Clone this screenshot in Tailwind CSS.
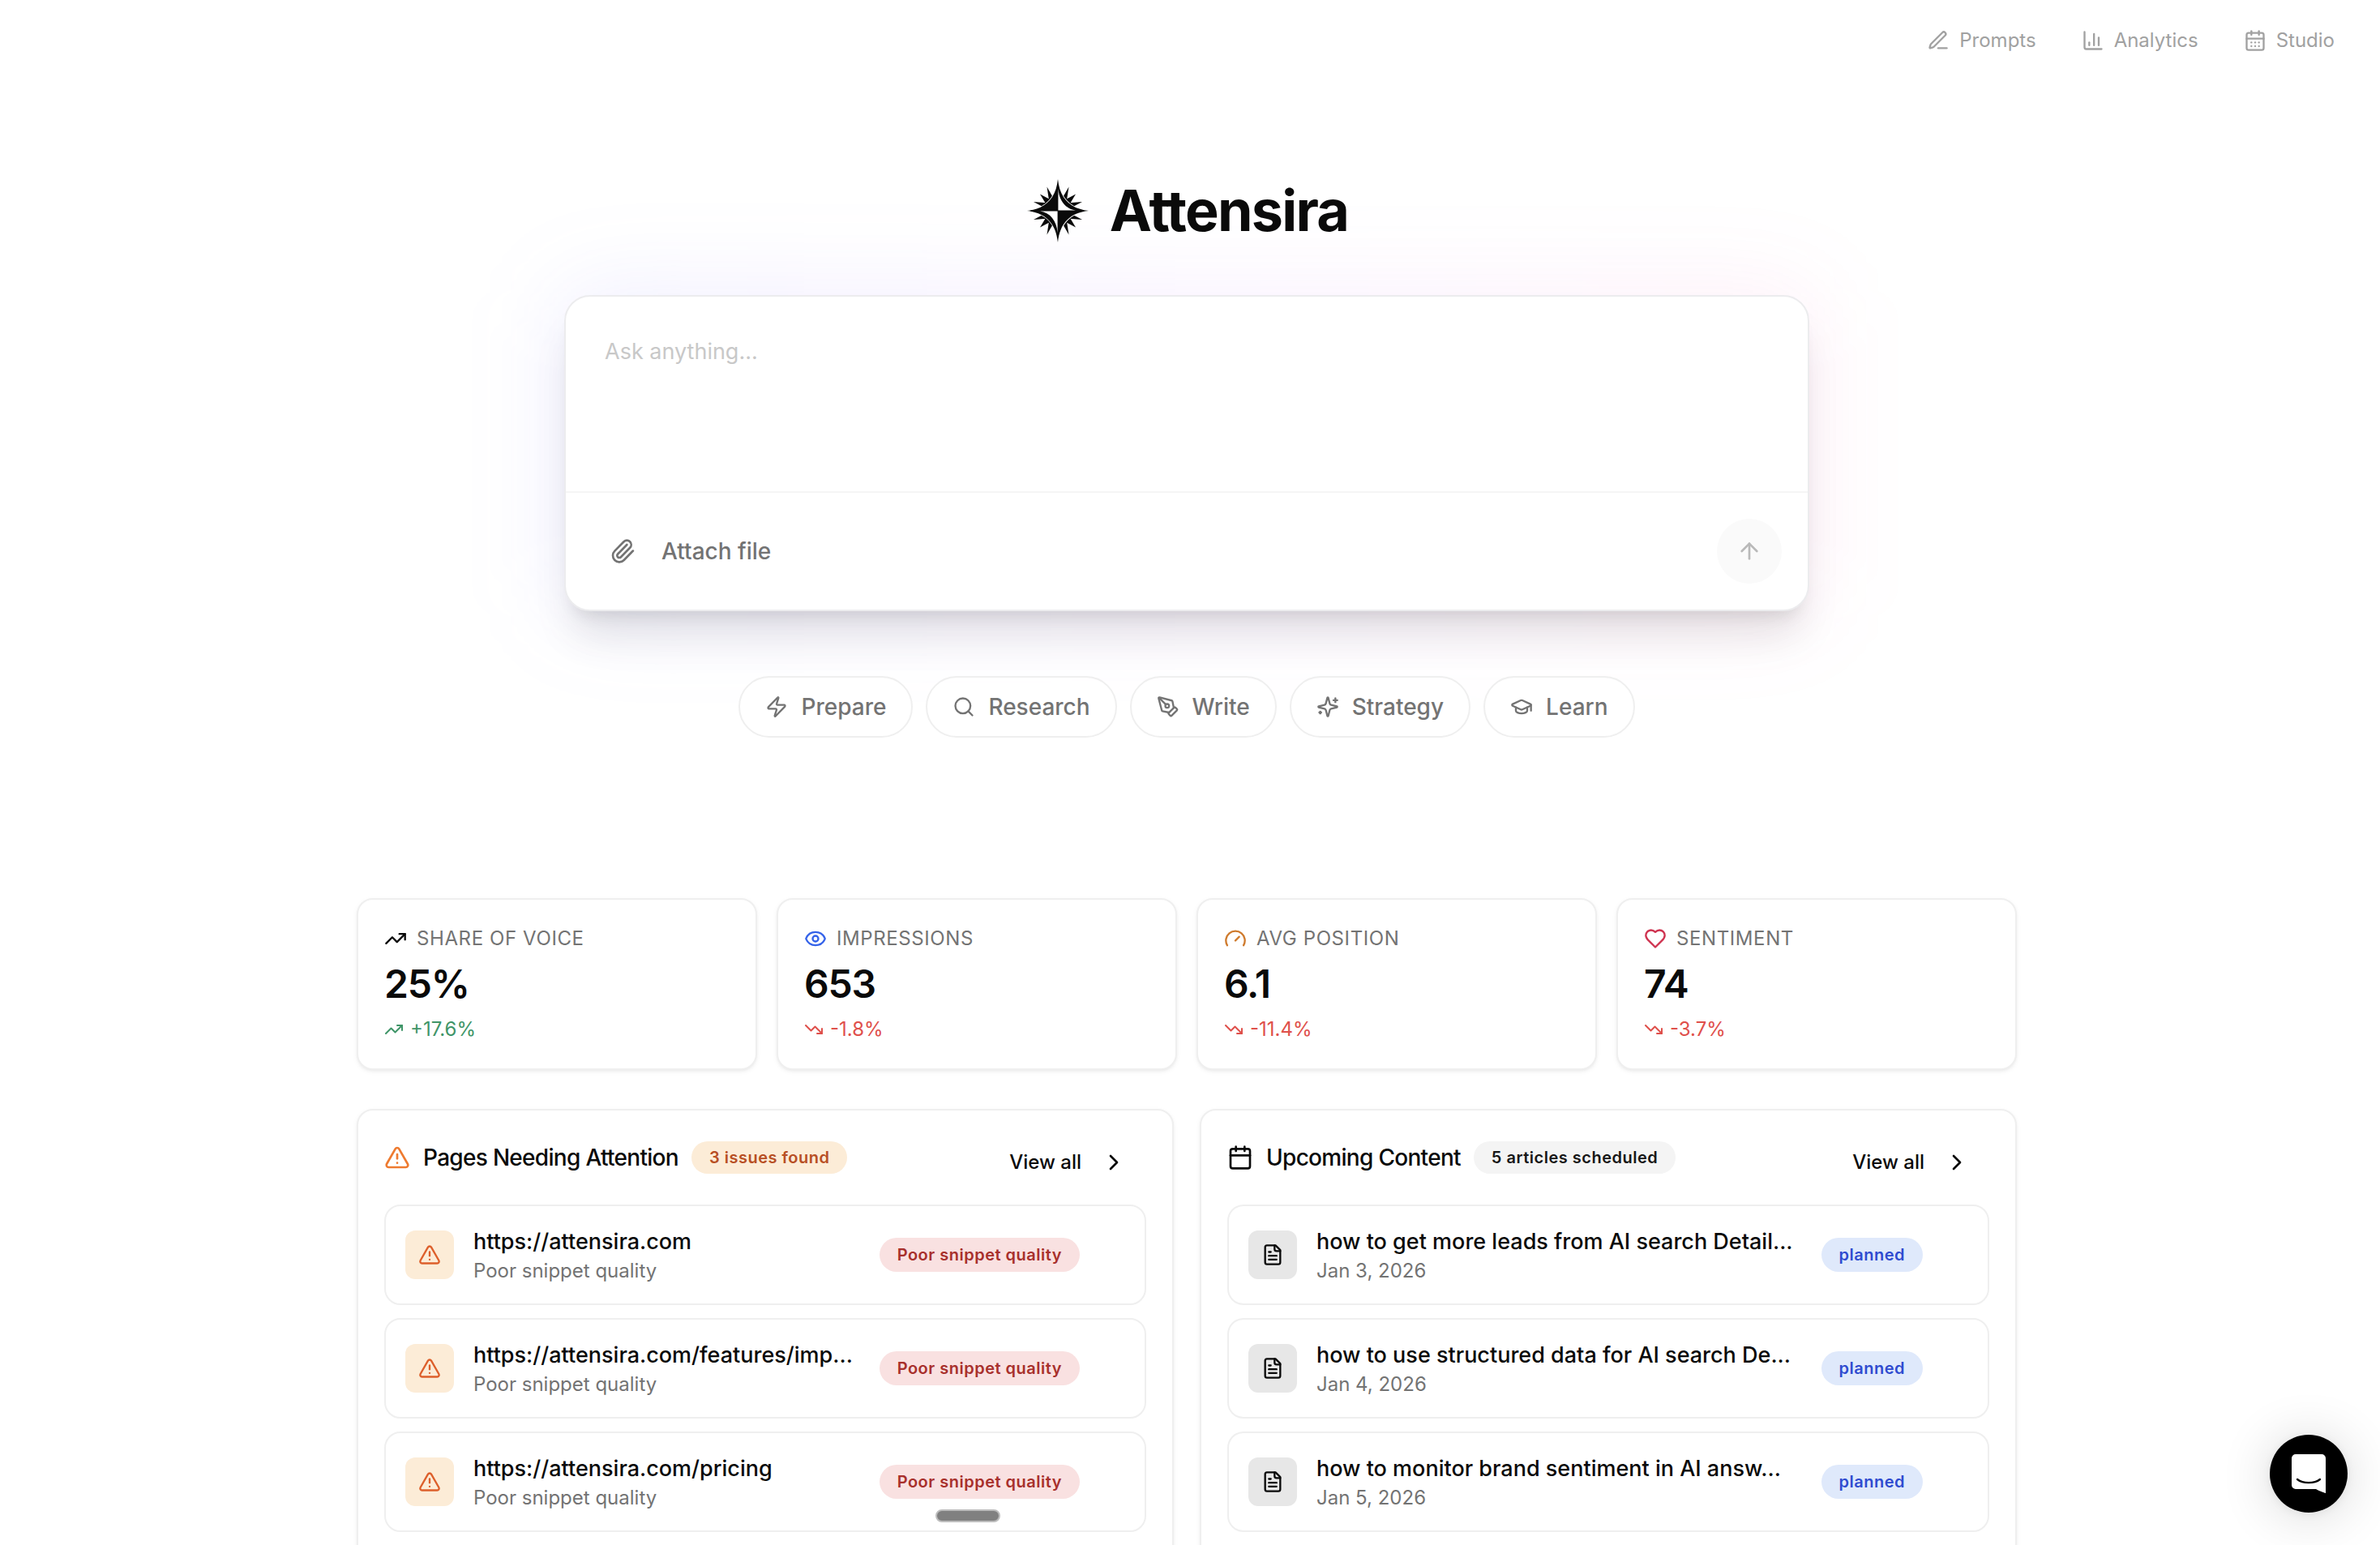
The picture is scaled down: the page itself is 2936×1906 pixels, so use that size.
<!DOCTYPE html>
<html lang="en">
<head>
  <meta charset="UTF-8" />
  <meta name="viewport" content="width=device-width, initial-scale=1.0" />
  <title>Attensira</title>
  <script src="https://cdn.jsdelivr.net/npm/@tailwindcss/browser@4"></script>
</head>
<body class="relative h-screen overflow-hidden bg-white pr-2 font-['Inter',sans-serif] text-neutral-950 antialiased">

  <!-- Icon sprite -->
  <svg class="hidden" aria-hidden="true">
    <symbol id="alert" viewBox="0 0 24 24"><path d="m21.73 18-8-14a2 2 0 0 0-3.48 0l-8 14A2 2 0 0 0 4 21h16a2 2 0 0 0 1.73-3" /><path d="M12 9v4" /><path d="M12 17h.01" /></symbol>
    <symbol id="doc" viewBox="0 0 24 24"><path d="M15 2H6a2 2 0 0 0-2 2v16a2 2 0 0 0 2 2h12a2 2 0 0 0 2-2V7Z" /><path d="M14 2v4a2 2 0 0 0 2 2h4" /><path d="M10 9H8" /><path d="M16 13H8" /><path d="M16 17H8" /></symbol>
    <symbol id="up" viewBox="0 0 24 24"><path d="M16 7h6v6" /><path d="m22 7-8.5 8.5-5-5L2 17" /></symbol>
    <symbol id="down" viewBox="0 0 24 24"><path d="M16 17h6v-6" /><path d="m22 17-8.5-8.5-5 5L2 7" /></symbol>
    <symbol id="chevron" viewBox="0 0 24 24"><path d="m9 18 6-6-6-6" /></symbol>
  </svg>

  <!-- Top nav -->
  <header class="flex justify-end px-12 py-9">
    <nav class="flex gap-14 text-2xl/7 text-[#a1a1a1]">
      <a href="#" class="flex items-center gap-3">
        <svg class="size-7" viewBox="0 0 24 24" fill="none" stroke="currentColor" stroke-width="2" stroke-linecap="round" stroke-linejoin="round"><path d="M12 20h9" /><path d="M16.376 3.622a1 1 0 0 1 3.002 3.002L7.368 18.635a2 2 0 0 1-.855.506l-2.872.838a.5.5 0 0 1-.62-.62l.838-2.872a2 2 0 0 1 .506-.854z" /></svg>
        Prompts
      </a>
      <a href="#" class="flex items-center gap-3">
        <svg class="size-7" viewBox="0 0 24 24" fill="none" stroke="currentColor" stroke-width="2" stroke-linecap="round" stroke-linejoin="round"><path d="M3 3v16a2 2 0 0 0 2 2h16" /><path d="M18 17V9" /><path d="M13 17V5" /><path d="M8 17v-3" /></svg>
        Analytics
      </a>
      <a href="#" class="flex items-center gap-3">
        <svg class="size-7" viewBox="0 0 24 24" fill="none" stroke="currentColor" stroke-width="2" stroke-linecap="round" stroke-linejoin="round"><path d="M8 2v4" /><path d="M16 2v4" /><rect width="18" height="18" x="3" y="4" rx="2" /><path d="M3 10h18" /><path d="M8 14h.01" /><path d="M12 14h.01" /><path d="M16 14h.01" /><path d="M8 18h.01" /><path d="M12 18h.01" /><path d="M16 18h.01" /></svg>
        Studio
      </a>
    </nav>
  </header>

  <main>
    <!-- Hero -->
    <section class="mx-auto max-w-[1536px] pt-[120px]">
      <div class="relative z-10 flex items-center justify-center gap-6">
        <svg class="size-20" viewBox="-40 -40 80 80" aria-hidden="true">
          <g fill="#0a0a0a">
            <g id="rays">
              <path d="M13.500 -29.500 L4 -13 L10.500 -10Z" />
              <path d="M22 -20.500 L6 -12 L13 -5.500Z" />
              <path d="M30 -11 L11 -9.500 L14 -2.500Z" />
            </g>
            <use href="#rays" transform="scale(-1 1)" />
            <use href="#rays" transform="scale(1 -1)" />
            <use href="#rays" transform="scale(-1 -1)" />
          </g>
          <path d="M0 -39C2.500 -15 15 -2.500 38 0C15 2.500 2.500 15 0 39C-2.500 15 -15 2.500 -38 0C-15 -2.500 -2.500 -15 0 -39Z" fill="#0a0a0a" stroke="#fff" stroke-width="1.400" paint-order="stroke" />
          <path d="M.4 -27C1.500 -12 10 -2 22 -.5L.4 -.5Z" fill="#fff" />
          <path d="M-.4 27C-1.500 12 -10 2 -22 .5L-.4 .5Z" fill="#fff" />
        </svg>
        <h1 class="text-[70px]/20 font-bold tracking-tight">Attensira</h1>
      </div>

      <div class="relative mt-16">
        <div class="absolute -inset-2 rounded-[40px] bg-linear-to-r from-indigo-500/10 via-purple-500/8 to-pink-500/8 blur-[56px]"></div>
        <form class="relative overflow-hidden rounded-[32px] border-2 border-[#ececee] bg-white shadow-[0_40px_50px_-10px_rgba(0,0,0,0.1),0_16px_20px_-12px_rgba(0,0,0,0.1)]">
          <textarea aria-label="Ask anything" placeholder="Ask anything..." class="block h-60 w-full resize-none px-12 pt-12 text-[27px]/10 outline-none placeholder:text-[#c8c8c8]"></textarea>
          <div class="flex items-center justify-between border-t-2 border-[#f5f5f5] p-8">
            <button type="button" class="flex items-center gap-8 px-[22px] text-[28px]/10 font-medium text-[#737373]">
              <svg class="size-8" viewBox="0 0 24 24" fill="none" stroke="currentColor" stroke-width="2" stroke-linecap="round" stroke-linejoin="round"><path d="m16 6-8.414 8.586a2 2 0 0 0 2.829 2.829l8.414-8.586a4 4 0 1 0-5.657-5.657l-8.379 8.551a6 6 0 1 0 8.485 8.485l8.379-8.551" /></svg>
              Attach file
            </button>
            <button type="submit" aria-label="Send" class="flex size-20 items-center justify-center rounded-full bg-[#fafafa] text-[#b9b9b9]">
              <svg class="size-8" viewBox="0 0 24 24" fill="none" stroke="currentColor" stroke-width="2" stroke-linecap="round" stroke-linejoin="round"><path d="m5 12 7-7 7 7" /><path d="M12 19V5" /></svg>
            </button>
          </div>
        </form>
      </div>

      <div class="relative mt-20 flex justify-center gap-4 text-[28px]/9 font-medium text-[#737373]">
        <button class="flex items-center gap-4 rounded-full border-2 border-[#efefef] bg-white/60 px-[31px] py-[18px]">
          <svg class="size-7" viewBox="0 0 24 24" fill="none" stroke="currentColor" stroke-width="2" stroke-linecap="round" stroke-linejoin="round"><path d="M4 14a1 1 0 0 1-.78-1.630l9.900-10.200a.5.5 0 0 1 .86.460l-1.920 6.020A1 1 0 0 0 13 10h7a1 1 0 0 1 .78 1.630l-9.900 10.200a.5.5 0 0 1-.86-.460l1.920-6.020A1 1 0 0 0 11 14z" /></svg>
          Prepare
        </button>
        <button class="flex items-center gap-4 rounded-full border-2 border-[#efefef] bg-white/60 px-[31px] py-[18px]">
          <svg class="size-7" viewBox="0 0 24 24" fill="none" stroke="currentColor" stroke-width="2" stroke-linecap="round" stroke-linejoin="round"><path d="m21 21-4.340-4.340" /><circle cx="11" cy="11" r="8" /></svg>
          Research
        </button>
        <button class="flex items-center gap-4 rounded-full border-2 border-[#efefef] bg-white/60 px-[31px] py-[18px]">
          <svg class="size-7" viewBox="0 0 24 24" fill="none" stroke="currentColor" stroke-width="2" stroke-linecap="round" stroke-linejoin="round"><path d="M15.707 21.293a1 1 0 0 1-1.414 0l-1.586-1.586a1 1 0 0 1 0-1.414l5.586-5.586a1 1 0 0 1 1.414 0l1.586 1.586a1 1 0 0 1 0 1.414z" /><path d="m18 13-1.375-6.874a1 1 0 0 0-.746-.776L3.235 2.028a1 1 0 0 0-1.207 1.207L5.350 15.879a1 1 0 0 0 .776.746L13 18" /><path d="m2.300 2.300 7.286 7.286" /><circle cx="11" cy="11" r="2" /></svg>
          Write
        </button>
        <button class="flex items-center gap-4 rounded-full border-2 border-[#efefef] bg-white/60 px-[31px] py-[18px]">
          <svg class="size-7" viewBox="0 0 24 24" fill="none" stroke="currentColor" stroke-width="2" stroke-linecap="round" stroke-linejoin="round"><path d="M9.937 15.500A2 2 0 0 0 8.500 14.063l-6.135-1.582a.5.5 0 0 1 0-.962L8.500 9.936A2 2 0 0 0 9.937 8.500l1.582-6.135a.5.5 0 0 1 .963 0L14.063 8.500A2 2 0 0 0 15.500 9.937l6.135 1.581a.5.5 0 0 1 0 .964L15.500 14.063a2 2 0 0 0-1.437 1.437l-1.582 6.135a.5.5 0 0 1-.963 0z" /><path d="M20 3v4" /><path d="M22 5h-4" /><path d="M4 17v2" /><path d="M5 18H3" /></svg>
          Strategy
        </button>
        <button class="flex items-center gap-4 rounded-full border-2 border-[#efefef] bg-white/60 px-[31px] py-[18px]">
          <svg class="size-7" viewBox="0 0 24 24" fill="none" stroke="currentColor" stroke-width="2" stroke-linecap="round" stroke-linejoin="round"><path d="M21.420 10.922a1 1 0 0 0-.019-1.838L12.830 5.180a2 2 0 0 0-1.660 0L2.600 9.080a1 1 0 0 0 0 1.832l8.570 3.908a2 2 0 0 0 1.660 0z" /><path d="M22 10v6" /><path d="M6 12.500V16a6 3 0 0 0 12 0v-3.500" /></svg>
          Learn
        </button>
      </div>
    </section>

    <!-- Stats -->
    <section class="mx-auto mt-[198px] grid max-w-[2048px] grid-cols-4 gap-6">
      <div class="flex flex-col gap-2 rounded-[20px] border-2 border-[#efefef] bg-white p-8 shadow-[0_2px_6px_rgba(0,0,0,0.05),0_2px_4px_-2px_rgba(0,0,0,0.08)]">
        <div class="flex items-center gap-3 text-2xl tracking-wide text-[#737373] uppercase">
          <svg class="size-7 text-neutral-950" fill="none" stroke="currentColor" stroke-width="2" stroke-linecap="round" stroke-linejoin="round"><use href="#up" /></svg>
          Share of Voice
        </div>
        <div class="text-5xl/16 font-semibold tracking-tight">25%</div>
        <div class="flex items-center gap-2 text-2xl text-[#3f9568]">
          <svg class="size-6" fill="none" stroke="currentColor" stroke-width="2" stroke-linecap="round" stroke-linejoin="round"><use href="#up" /></svg>
          +17.6%
        </div>
      </div>
      <div class="flex flex-col gap-2 rounded-[20px] border-2 border-[#efefef] bg-white p-8 shadow-[0_2px_6px_rgba(0,0,0,0.05),0_2px_4px_-2px_rgba(0,0,0,0.08)]">
        <div class="flex items-center gap-3 text-2xl tracking-wide text-[#737373] uppercase">
          <svg class="size-7 text-[#3563e9]" viewBox="0 0 24 24" fill="none" stroke="currentColor" stroke-width="2" stroke-linecap="round" stroke-linejoin="round"><path d="M2.062 12.348a1 1 0 0 1 0-.696 10.750 10.750 0 0 1 19.876 0 1 1 0 0 1 0 .696 10.750 10.750 0 0 1-19.876 0" /><circle cx="12" cy="12" r="3" /></svg>
          Impressions
        </div>
        <div class="text-5xl/16 font-semibold tracking-tight">653</div>
        <div class="flex items-center gap-2 text-2xl text-[#df504b]">
          <svg class="size-6" fill="none" stroke="currentColor" stroke-width="2" stroke-linecap="round" stroke-linejoin="round"><use href="#down" /></svg>
          -1.8%
        </div>
      </div>
      <div class="flex flex-col gap-2 rounded-[20px] border-2 border-[#efefef] bg-white p-8 shadow-[0_2px_6px_rgba(0,0,0,0.05),0_2px_4px_-2px_rgba(0,0,0,0.08)]">
        <div class="flex items-center gap-3 text-2xl tracking-wide text-[#737373] uppercase">
          <svg class="size-7 text-[#cf7b2e]" viewBox="0 0 24 24" fill="none" stroke="currentColor" stroke-width="2" stroke-linecap="round" stroke-linejoin="round"><path d="m12 14 4-4" /><path d="M3.340 19a10 10 0 1 1 17.320 0" /></svg>
          Avg Position
        </div>
        <div class="text-5xl/16 font-semibold tracking-tight">6.1</div>
        <div class="flex items-center gap-2 text-2xl text-[#df504b]">
          <svg class="size-6" fill="none" stroke="currentColor" stroke-width="2" stroke-linecap="round" stroke-linejoin="round"><use href="#down" /></svg>
          -11.4%
        </div>
      </div>
      <div class="flex flex-col gap-2 rounded-[20px] border-2 border-[#efefef] bg-white p-8 shadow-[0_2px_6px_rgba(0,0,0,0.05),0_2px_4px_-2px_rgba(0,0,0,0.08)]">
        <div class="flex items-center gap-3 text-2xl tracking-wide text-[#737373] uppercase">
          <svg class="size-7 text-[#cf3350]" viewBox="0 0 24 24" fill="none" stroke="currentColor" stroke-width="2" stroke-linecap="round" stroke-linejoin="round"><path d="M19 14c1.490-1.460 3-3.210 3-5.500A5.500 5.500 0 0 0 16.500 3c-1.760 0-3 .5-4.500 2-1.500-1.500-2.740-2-4.500-2A5.500 5.500 0 0 0 2 8.500c0 2.300 1.500 4.050 3 5.500l7 7Z" /></svg>
          Sentiment
        </div>
        <div class="text-5xl/16 font-semibold tracking-tight">74</div>
        <div class="flex items-center gap-2 text-2xl text-[#df504b]">
          <svg class="size-6" fill="none" stroke="currentColor" stroke-width="2" stroke-linecap="round" stroke-linejoin="round"><use href="#down" /></svg>
          -3.7%
        </div>
      </div>
    </section>

    <!-- Panels -->
    <section class="mx-auto mt-12 grid max-w-[2048px] grid-cols-2 gap-8">
      <div class="rounded-[20px] border-2 border-[#efefef] bg-white p-8 shadow-[0_2px_6px_rgba(0,0,0,0.05),0_2px_4px_-2px_rgba(0,0,0,0.08)]">
        <div class="mb-5 flex items-start justify-between">
          <div class="flex h-13 items-center gap-4">
            <svg class="size-8 text-[#ee7b30]" fill="none" stroke="currentColor" stroke-width="2" stroke-linecap="round" stroke-linejoin="round"><use href="#alert" /></svg>
            <h2 class="text-[28px]/10 font-medium tracking-tight">Pages Needing Attention</h2>
            <span class="rounded-full bg-[#fcecd7] px-[22px] py-1.5 text-xl/7 font-semibold tracking-wide text-[#b84f24]">3 issues found</span>
          </div>
          <button class="flex h-16 items-center gap-6 px-6 text-2xl font-medium">
            View all
            <svg class="size-8" fill="none" stroke="currentColor" stroke-width="2" stroke-linecap="round" stroke-linejoin="round"><use href="#chevron" /></svg>
          </button>
        </div>
        <ul class="flex flex-col gap-4">
          <li class="flex items-center gap-6 rounded-[20px] border-2 border-[#efefef] py-6 pr-20 pl-6">
            <span class="flex size-15 shrink-0 items-center justify-center rounded-xl bg-[#fcecd7] text-[#dd5f2b]">
              <svg class="size-7" fill="none" stroke="currentColor" stroke-width="2" stroke-linecap="round" stroke-linejoin="round"><use href="#alert" /></svg>
            </span>
            <div class="min-w-0 flex-1">
              <p class="truncate text-[27px]/10 font-medium">https://attensira.com</p>
              <p class="text-2xl text-[#737373]">Poor snippet quality</p>
            </div>
            <span class="rounded-full bg-[#f9e1e1] px-[22px] py-[7px] text-xl/7 font-semibold tracking-wide text-[#a8302c]">Poor snippet quality</span>
          </li>
          <li class="flex items-center gap-6 rounded-[20px] border-2 border-[#efefef] py-6 pr-20 pl-6">
            <span class="flex size-15 shrink-0 items-center justify-center rounded-xl bg-[#fcecd7] text-[#dd5f2b]">
              <svg class="size-7" fill="none" stroke="currentColor" stroke-width="2" stroke-linecap="round" stroke-linejoin="round"><use href="#alert" /></svg>
            </span>
            <div class="min-w-0 flex-1">
              <p class="truncate text-[27px]/10 font-medium">https://attensira.com/features/imp...</p>
              <p class="text-2xl text-[#737373]">Poor snippet quality</p>
            </div>
            <span class="rounded-full bg-[#f9e1e1] px-[22px] py-[7px] text-xl/7 font-semibold tracking-wide text-[#a8302c]">Poor snippet quality</span>
          </li>
          <li class="flex items-center gap-6 rounded-[20px] border-2 border-[#efefef] py-6 pr-20 pl-6">
            <span class="flex size-15 shrink-0 items-center justify-center rounded-xl bg-[#fcecd7] text-[#dd5f2b]">
              <svg class="size-7" fill="none" stroke="currentColor" stroke-width="2" stroke-linecap="round" stroke-linejoin="round"><use href="#alert" /></svg>
            </span>
            <div class="min-w-0 flex-1">
              <p class="truncate text-[27px]/10 font-medium">https://attensira.com/pricing</p>
              <p class="text-2xl text-[#737373]">Poor snippet quality</p>
            </div>
            <span class="rounded-full bg-[#f9e1e1] px-[22px] py-[7px] text-xl/7 font-semibold tracking-wide text-[#a8302c]">Poor snippet quality</span>
          </li>
        </ul>
      </div>

      <div class="rounded-[20px] border-2 border-[#efefef] bg-white p-8 shadow-[0_2px_6px_rgba(0,0,0,0.05),0_2px_4px_-2px_rgba(0,0,0,0.08)]">
        <div class="mb-5 flex items-start justify-between">
          <div class="flex h-13 items-center gap-4">
            <svg class="size-8" viewBox="0 0 24 24" fill="none" stroke="currentColor" stroke-width="2" stroke-linecap="round" stroke-linejoin="round"><path d="M8 2v4" /><path d="M16 2v4" /><rect width="18" height="18" x="3" y="4" rx="2" /><path d="M3 10h18" /></svg>
            <h2 class="text-[28px]/10 font-medium tracking-tight">Upcoming Content</h2>
            <span class="rounded-full bg-[#f4f4f4] px-[22px] py-1.5 text-xl/7 font-semibold tracking-wide text-neutral-900">5 articles scheduled</span>
          </div>
          <button class="flex h-16 items-center gap-6 px-6 text-2xl font-medium">
            View all
            <svg class="size-8" fill="none" stroke="currentColor" stroke-width="2" stroke-linecap="round" stroke-linejoin="round"><use href="#chevron" /></svg>
          </button>
        </div>
        <ul class="flex flex-col gap-4">
          <li class="flex items-center gap-6 rounded-[20px] border-2 border-[#efefef] py-6 pr-20 pl-6">
            <span class="flex size-15 shrink-0 items-center justify-center rounded-xl bg-[#e7e7e7]">
              <svg class="size-7" fill="none" stroke="currentColor" stroke-width="2" stroke-linecap="round" stroke-linejoin="round"><use href="#doc" /></svg>
            </span>
            <div class="min-w-0 flex-1">
              <p class="truncate text-[27px]/10 font-medium">how to get more leads from AI search Detail...</p>
              <p class="text-2xl text-[#737373]">Jan 3, 2026</p>
            </div>
            <span class="rounded-full bg-[#dfe9fb] px-[22px] py-[7px] text-xl/7 font-semibold tracking-wide text-[#2f4bd0]">planned</span>
          </li>
          <li class="flex items-center gap-6 rounded-[20px] border-2 border-[#efefef] py-6 pr-20 pl-6">
            <span class="flex size-15 shrink-0 items-center justify-center rounded-xl bg-[#e7e7e7]">
              <svg class="size-7" fill="none" stroke="currentColor" stroke-width="2" stroke-linecap="round" stroke-linejoin="round"><use href="#doc" /></svg>
            </span>
            <div class="min-w-0 flex-1">
              <p class="truncate text-[27px]/10 font-medium">how to use structured data for AI search De...</p>
              <p class="text-2xl text-[#737373]">Jan 4, 2026</p>
            </div>
            <span class="rounded-full bg-[#dfe9fb] px-[22px] py-[7px] text-xl/7 font-semibold tracking-wide text-[#2f4bd0]">planned</span>
          </li>
          <li class="flex items-center gap-6 rounded-[20px] border-2 border-[#efefef] py-6 pr-20 pl-6">
            <span class="flex size-15 shrink-0 items-center justify-center rounded-xl bg-[#e7e7e7]">
              <svg class="size-7" fill="none" stroke="currentColor" stroke-width="2" stroke-linecap="round" stroke-linejoin="round"><use href="#doc" /></svg>
            </span>
            <div class="min-w-0 flex-1">
              <p class="truncate text-[27px]/10 font-medium">how to monitor brand sentiment in AI answ...</p>
              <p class="text-2xl text-[#737373]">Jan 5, 2026</p>
            </div>
            <span class="rounded-full bg-[#dfe9fb] px-[22px] py-[7px] text-xl/7 font-semibold tracking-wide text-[#2f4bd0]">planned</span>
          </li>
        </ul>
      </div>
    </section>
  </main>

  <!-- Drag handle -->
  <div class="absolute bottom-7 left-[1154px] h-4 w-20 rounded-lg border-2 border-[#bdbdbd] bg-[#808080]"></div>

  <!-- Chat launcher -->
  <button aria-label="Open chat" class="absolute right-10 bottom-10 flex size-24 items-center justify-center rounded-full bg-black shadow-[0_2px_12px_rgba(0,0,0,0.06),0_4px_64px_rgba(0,0,0,0.16)]">
    <svg class="h-12 w-[42px]" viewBox="0 0 42 48" aria-hidden="true"><path d="M5 0H37a5 5 0 0 1 5 5V48S36 46.500 30 43H5a5 5 0 0 1-5-5V5a5 5 0 0 1 5-5Z" fill="#fff" /><path d="M7 31C14 36.500 28 36.500 35 31" fill="none" stroke="#000" stroke-width="2.400" stroke-linecap="round" /></svg>
  </button>
</body>
</html>
